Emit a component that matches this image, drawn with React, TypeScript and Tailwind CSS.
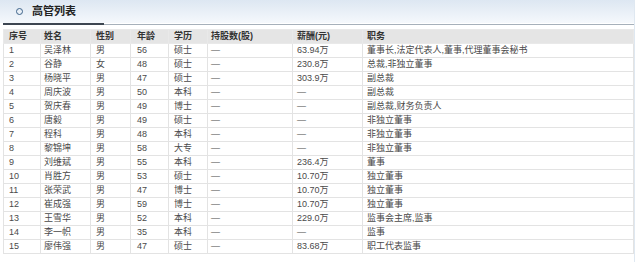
import React from "react";

const rows: string[][] = [
  ["1", "吴泽林", "男", "56", "硕士", "—", "63.94万", "董事长,法定代表人,董事,代理董事会秘书"],
  ["2", "谷静", "女", "48", "硕士", "—", "230.8万", "总裁,非独立董事"],
  ["3", "杨晓平", "男", "47", "硕士", "—", "303.9万", "副总裁"],
  ["4", "周庆波", "男", "50", "本科", "—", "—", "副总裁"],
  ["5", "贺庆春", "男", "49", "博士", "—", "—", "副总裁,财务负责人"],
  ["6", "唐毅", "男", "49", "硕士", "—", "—", "非独立董事"],
  ["7", "程科", "男", "48", "本科", "—", "—", "非独立董事"],
  ["8", "黎锦坤", "男", "58", "大专", "—", "—", "非独立董事"],
  ["9", "刘维斌", "男", "55", "本科", "—", "236.4万", "董事"],
  ["10", "肖胜方", "男", "53", "硕士", "—", "10.70万", "独立董事"],
  ["11", "张荣武", "男", "47", "博士", "—", "10.70万", "独立董事"],
  ["12", "崔成强", "男", "59", "博士", "—", "10.70万", "独立董事"],
  ["13", "王雪华", "男", "52", "本科", "—", "229.0万", "监事会主席,监事"],
  ["14", "李一帜", "男", "35", "本科", "—", "—", "监事"],
  ["15", "廖伟强", "男", "47", "硕士", "—", "83.68万", "职工代表监事"],
];

const headers = ["序号", "姓名", "性别", "年龄", "学历", "持股数(股)", "薪酬(元)", "职务"];
const widths = ["w-[37px]", "w-[50px]", "w-[40px]", "w-[38px]", "w-[39px]", "w-[85px]", "w-[70px]", "w-[271px]"];
const pads = ["pl-[5px]", "pl-[3px]", "pl-[5px]", "pl-[6px]", "pl-[5px]", "pl-[3px]", "pl-[4px]", "pl-[4px]"];

export default function App() {
  return (
    <div
      className="w-[640px] h-[262px] bg-white overflow-hidden"
      style={{ fontFamily: '"Liberation Sans", "Noto Sans CJK SC", sans-serif' }}
    >
      <div className="w-[635px] border-r border-[#dfe8f1]">
        <div className="h-[23px] bg-gradient-to-b from-[#dde7f2] to-[#f5f8fc] flex items-center pl-[16px]">
          <span className="w-[7px] h-[7px] rounded-full border-[1.5px] border-[#3c6289] mr-[9px]" />
          <span className="text-[11px] font-bold text-[#222] leading-none">高管列表</span>
        </div>
        <div className="flex h-[2px] ml-[3px]">
          <div className="w-[101px] bg-[#3d4651]" />
          <div className="flex-1 bg-[#a6b0ba] h-[1px] mt-[1px]" />
        </div>
        <div className="bg-white h-[237px] pt-[4px]">
          <table className="ml-[3px] w-[630px] table-fixed border-collapse text-[9px] text-[#4a4a4a] leading-none">
            <colgroup>
              {widths.map((w, i) => (
                <col key={i} className={w} />
              ))}
            </colgroup>
            <thead>
              <tr className="h-[14px] bg-[#e5e5e5]">
                {headers.map((h, i) => (
                  <th
                    key={i}
                    className={`${pads[i]} text-left font-bold text-[#333] border border-[#e9e9e9] py-0 pr-0`}
                  >
                    {h}
                  </th>
                ))}
              </tr>
            </thead>
            <tbody>
              {rows.map((r, ri) => (
                <tr key={ri} className="h-[14px]">
                  {r.map((c, ci) => (
                    <td
                      key={ci}
                      className={`${pads[ci]} text-left border border-[#e3e3e3] py-0 pr-0 whitespace-nowrap overflow-hidden`}
                    >
                      {c}
                    </td>
                  ))}
                </tr>
              ))}
            </tbody>
          </table>
        </div>
      </div>
    </div>
  );
}
